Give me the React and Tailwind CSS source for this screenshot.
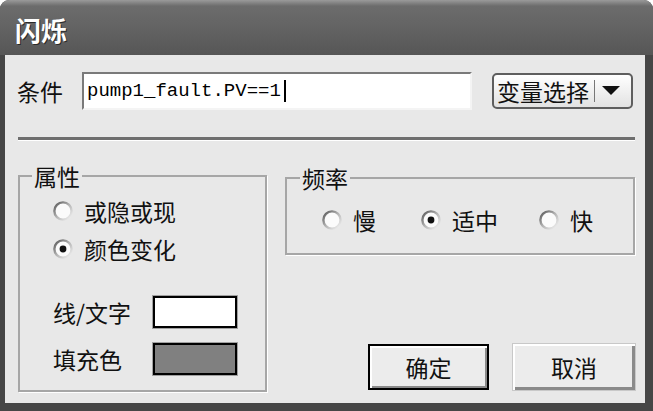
import React from 'react';

const cjk = { fontFamily: '"Noto Sans CJK SC", "Noto Sans", sans-serif' };

const Radio = ({ checked }) => (
  <svg width="20" height="20" viewBox="0 0 20 20" className="shrink-0">
    <defs>
      <linearGradient id="radioRing" x1="0" y1="0" x2="1" y2="1">
        <stop offset="0" stopColor="#555555" />
        <stop offset="0.5" stopColor="#b5b5b5" />
        <stop offset="1" stopColor="#f6f6f6" />
      </linearGradient>
    </defs>
    <circle cx="10" cy="10" r="8.6" fill="#fbfbfb" stroke="url(#radioRing)" strokeWidth="2.4" />
    {checked && <circle cx="10" cy="10" r="3.4" fill="#111111" />}
  </svg>
);

const RadioItem = ({ checked, label, className = '' }) => (
  <div className={`flex items-center gap-[11px] ${className}`}>
    <Radio checked={checked} />
    <span className="text-[23px] leading-none text-[#111]">{label}</span>
  </div>
);

const App = () => {
  return (
    <div className="w-[653px] h-[411px] bg-white" style={cjk}>
      <div className="w-full h-full flex flex-col rounded-t-[9px] overflow-hidden bg-[#464646]">
        {/* Title bar */}
        <div className="h-[55px] shrink-0 flex items-center pl-[15px] pt-[5px] bg-[linear-gradient(to_bottom,#9a9a9a_0px,#6c6c6c_6px,#626262_30px,#565656_55px)]">
          <span className="text-[26px] leading-none font-bold text-white [text-shadow:1px_1px_0_#2a2a2a]">闪烁</span>
        </div>

        {/* Body */}
        <div className="flex-1 ml-[5px] mr-[8px] mb-[8px] bg-[#e8e8e8] flex flex-col pl-[12px] pr-[10px]">
          {/* Condition row */}
          <div className="flex items-center mt-[17px]">
            <span className="w-[65px] text-[23px] leading-none text-[#111]">条件</span>
            <div className="w-[390px] h-[38px] bg-white border-2 border-t-[#7a7a7a] border-l-[#7a7a7a] border-r-[#f4f4f4] border-b-[#f4f4f4] flex items-center pl-[3px]">
              <span className="text-[19px] leading-none text-black" style={{ fontFamily: '"Liberation Mono", monospace' }}>pump1_fault.PV==1</span>
              <span className="w-[2px] h-[22px] bg-black ml-[3px]" />
            </div>
            <div className="ml-[20px] w-[141px] h-[36px] rounded-[5px] border-2 border-[#5e5e5e] bg-linear-to-b from-white to-[#e2e2e2] flex items-center pl-[3px]">
              <span className="text-[23px] leading-none text-[#111]">变量选择</span>
              <span className="w-[1px] h-[22px] bg-[#777] ml-[5px]" />
              <svg width="18" height="10" viewBox="0 0 18 10" className="ml-[7px]">
                <polygon points="0,0 18,0 9,9" fill="#111" />
              </svg>
            </div>
          </div>

          {/* Separator */}
          <div className="mt-[27px] ml-[1px] h-[4px] bg-[#6e6e6e] border-b border-white" />

          {/* Lower area */}
          <div className="flex mt-[23px] ml-[1px] gap-[18px]">
            <fieldset className="w-[249px] border-2 border-[#a6a6a6] shadow-[1px_1px_0_#fff]">
              <legend className="ml-[12px] px-[2px] text-[23px] leading-[24px] text-[#111]">属性</legend>
              <div className="flex flex-col pl-[33px] pb-[15px]">
                <RadioItem checked={false} label="或隐或现" className="h-[38px] mt-[4px]" />
                <RadioItem checked label="颜色变化" className="h-[38px]" />
                <div className="flex items-center mt-[28px]">
                  <span className="w-[100px] text-[23px] leading-none text-[#111]">线/文字</span>
                  <div className="w-[84px] h-[32px] bg-white border-2 border-black shadow-[0_0_0_1px_#a0a0a0]" />
                </div>
                <div className="flex items-center mt-[15px]">
                  <span className="w-[100px] text-[23px] leading-none text-[#111]">填充色</span>
                  <div className="w-[84px] h-[32px] bg-[#808080] border-2 border-black shadow-[0_0_0_1px_#a0a0a0]" />
                </div>
              </div>
            </fieldset>

            <div className="flex flex-col w-[350px]">
              <fieldset className="border-2 border-[#a6a6a6] shadow-[1px_1px_0_#fff] mt-[2px]">
                <legend className="ml-[13px] px-[2px] text-[23px] leading-[24px] text-[#111]">频率</legend>
                <div className="flex items-center h-[36px] mt-[12px] mb-[15px] pl-[35px]">
                  <RadioItem checked={false} label="慢" />
                  <RadioItem checked label="适中" className="ml-[45px]" />
                  <RadioItem checked={false} label="快" className="ml-[41px]" />
                </div>
              </fieldset>

              <div className="flex justify-end gap-[24px] mt-[89px]">
                <button className="w-[121px] h-[46px] bg-[#ececec] border-2 border-black shadow-[inset_2px_2px_0_#fff,inset_-2px_-2px_0_#8a8a8a] text-[23px] leading-none text-[#111]">确定</button>
                <button className="w-[122px] h-[46px] bg-[#ececec] shadow-[inset_2px_2px_0_#fff,inset_-3px_-3px_0_#8a8a8a,0_0_0_1px_#c8c8c8] text-[23px] leading-none text-[#111]">取消</button>
              </div>
            </div>
          </div>
        </div>
      </div>
    </div>
  );
};

export default App;
